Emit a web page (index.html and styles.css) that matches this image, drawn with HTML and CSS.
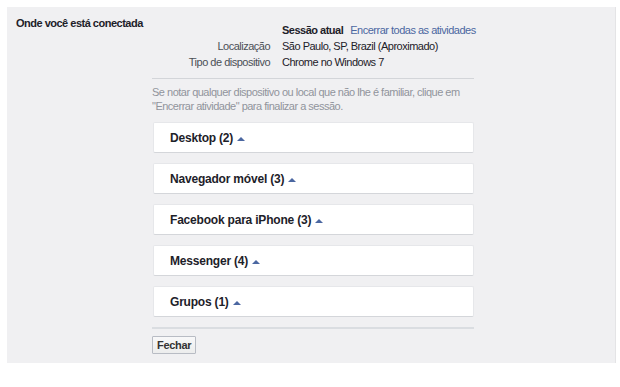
FILE: index.html
```html
<!DOCTYPE html>
<html lang="pt-BR">
<head>
    <meta charset="UTF-8">
    <title>Onde você está conectada</title>
    <link rel="stylesheet" href="styles.css">
</head>
<body>
    <section class="panel">
        <h2 class="panel-title">Onde você está conectada</h2>

        <div class="panel-body">
            <!-- Current session -->
            <div class="session-info">
                <div class="info-row">
                    <span class="info-label"></span>
                    <span class="info-value">
                        <strong class="current">Sessão atual</strong>
                        <a class="link" href="#">Encerrar todas as atividades</a>
                    </span>
                </div>
                <div class="info-row">
                    <span class="info-label">Localização</span>
                    <span class="info-value">São Paulo, SP, Brazil (Aproximado)</span>
                </div>
                <div class="info-row">
                    <span class="info-label">Tipo de dispositivo</span>
                    <span class="info-value">Chrome no Windows 7</span>
                </div>
            </div>

            <p class="hint">
                Se notar qualquer dispositivo ou local que não lhe é familiar, clique em
                "Encerrar atividade" para finalizar a sessão.
            </p>

            <!-- Device groups -->
            <div class="groups">
                <div class="group-card">Desktop (2) <span class="caret"></span></div>
                <div class="group-card">Navegador móvel (3) <span class="caret"></span></div>
                <div class="group-card">Facebook para iPhone (3) <span class="caret"></span></div>
                <div class="group-card">Messenger (4) <span class="caret"></span></div>
                <div class="group-card">Grupos (1) <span class="caret"></span></div>
            </div>

            <div class="actions">
                <button class="btn" type="button">Fechar</button>
            </div>
        </div>
    </section>
</body>
</html>
```
FILE: styles.css
```css
* {
    margin: 0;
    padding: 0;
    box-sizing: border-box;
}

body {
    font-family: 'Liberation Sans', Arial, Helvetica, sans-serif;
    font-size: 11px;
    letter-spacing: -0.5px;
    color: #1d2129;
    background: #ffffff;
    padding: 7px 4px 0 7px;
}

.panel {
    display: flex;
    background: #f0f0f2;
    border-right: 1px solid #e4e4e6;
    height: 356px;
    padding: 10px 0 0 9px;
}

.panel-title {
    width: 136px;
    white-space: nowrap;
    font-size: 11px;
    font-weight: bold;
    color: #1d2129;
}

.panel-body {
    width: 322px;
}

/* Current session */
.session-info {
    padding: 5px 0 8px;
    border-bottom: 1px solid #d3d5d9;
}

.info-row {
    display: flex;
    gap: 12px;
    line-height: 16px;
    white-space: nowrap;
}

.info-label {
    flex: none;
    width: 118px;
    text-align: right;
    color: #4b4f56;
}

.info-value {
    flex: none;
    display: flex;
    gap: 7px;
    color: #1d2129;
}

.current {
    font-weight: bold;
    color: #1d2129;
}

.link {
    color: #4b67a1;
    text-decoration: none;
}

.hint {
    color: #90949c;
    line-height: 14px;
    padding: 6px 0 9px;
}

/* Device groups */
.groups {
    display: flex;
    flex-direction: column;
    gap: 10px;
    padding: 0 0 10px 1px;
    border-bottom: 2px solid #dadde1;
}

.group-card {
    height: 31px;
    display: flex;
    align-items: center;
    gap: 4px;
    padding-left: 16px;
    background: #ffffff;
    border: 1px solid #e6e7ea;
    border-bottom-color: #d4d6da;
    border-radius: 2px;
    font-size: 12px;
    font-weight: bold;
    letter-spacing: -0.2px;
    color: #1d2129;
}

.caret {
    width: 0;
    height: 0;
    border-left: 4px solid transparent;
    border-right: 4px solid transparent;
    border-bottom: 4px solid #4b67a1;
    margin-top: 2px;
}

.actions {
    padding-top: 7px;
}

.btn {
    font-family: inherit;
    font-size: 11px;
    font-weight: bold;
    letter-spacing: -0.3px;
    color: #333333;
    background: linear-gradient(#f8f8f9, #eceded);
    border: 1px solid #b8bcc4;
    border-radius: 1px;
    padding: 0 4px;
    height: 18px;
}
```
